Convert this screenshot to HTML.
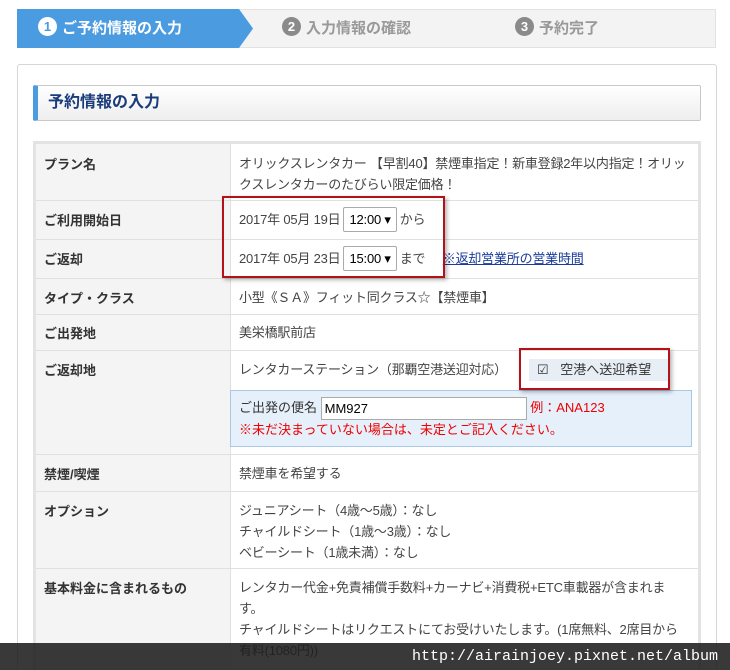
<!DOCTYPE html>
<html><head><meta charset="utf-8"><style>
*{margin:0;padding:0;box-sizing:border-box}
html,body{width:730px;height:670px;overflow:hidden}
body{background:#fff;font-family:"Liberation Sans","Noto Sans CJK JP",sans-serif;font-size:13px;color:#333;position:relative}
.abs{position:absolute}
.steps{left:17px;top:9px;width:699px;height:39px;background:#f3f3f3;border:1px solid #e2e2e2}
.st{position:absolute;top:0;height:37px;line-height:37px;font-size:15px;color:#999;font-weight:bold}
.num{display:inline-block;width:19px;height:19px;border-radius:50%;background:#8a8a8a;color:#fff;text-align:center;line-height:19px;font-size:13px;margin-right:5px;vertical-align:2px}
.card{left:17px;top:64px;width:700px;height:620px;border:1px solid #d6d6d6;border-radius:3px}
.hd{left:33px;top:85px;width:668px;height:36px;border:1px solid #c8c8c8;border-left:5px solid #4a9be0;background:linear-gradient(#fff,#eee);font-size:16px;font-weight:bold;color:#1a3c7a;line-height:34px;padding-left:10px;border-radius:2px}
.tbl{left:33px;top:141px;width:668px;height:540px;border:3px solid #e3e3e3;border-bottom:none;background:#fff}
.lab{left:0;top:0;width:195px;height:540px;background:#f4f4f4;border-right:1px solid #e0e0e0}
.hl{left:0;width:662px;height:1px;background:#e0e0e0}
.l{left:8px;font-weight:bold;font-size:13px;color:#333}
.v{left:203px;font-size:13px;color:#444;line-height:21px;letter-spacing:-0.2px}
.sel{display:inline-block;border:1px solid #aaa;border-radius:2px;padding:0 5px;height:25px;line-height:23px;background:#fff;margin:0 3px;color:#000}
.red{border:2px solid #b3121a;box-shadow:2px 2px 4px rgba(0,0,0,.3)}
</style></head><body>
<div class="abs steps">
 <svg class="abs" style="left:-1px;top:-1px" width="260" height="39"><polygon points="0,0 222,0 236,19.5 222,39 0,39" fill="#4a9be0"/><polyline points="468,0 482,19.5 468,39" fill="none" stroke="#ddd"/></svg>
 <div class="st" style="left:20px;color:#fff"><span class="num" style="background:#fff;color:#4a9be0">1</span>ご予約情報の入力</div>
 <div class="st" style="left:264px"><span class="num">2</span>入力情報の確認</div>
 <div class="st" style="left:497px"><span class="num">3</span>予約完了</div>
</div>
<div class="abs card"></div>
<div class="abs hd">予約情報の入力</div>
<div class="abs tbl">
 <div class="abs lab"></div>
 <div class="abs hl" style="top:56px"></div>
 <div class="abs hl" style="top:95px"></div>
 <div class="abs hl" style="top:134px"></div>
 <div class="abs hl" style="top:170px"></div>
 <div class="abs hl" style="top:206px"></div>
 <div class="abs hl" style="top:310px"></div>
 <div class="abs hl" style="top:347px"></div>
 <div class="abs hl" style="top:424px"></div>
 <div class="abs l" style="top:10px">プラン名</div>
 <div class="abs v" style="top:9px;width:455px">オリックスレンタカー 【早割40】禁煙車指定！新車登録2年以内指定！オリックスレンタカーのたびらい限定価格！</div>
 <div class="abs l" style="top:66px">ご利用開始日</div>
 <div class="abs v" style="top:63px">2017年 05月 19日<span class="sel">12:00 ▾</span>から</div>
 <div class="abs l" style="top:105px">ご返却</div>
 <div class="abs v" style="top:102px">2017年 05月 23日<span class="sel">15:00 ▾</span>まで <span style="color:#1a3c9a;text-decoration:underline;margin-left:14px">※返却営業所の営業時間</span></div>
 <div class="abs l" style="top:144px">タイプ・クラス</div>
 <div class="abs v" style="top:143px">小型《ＳＡ》フィット同クラス☆【禁煙車】</div>
 <div class="abs l" style="top:179px">ご出発地</div>
 <div class="abs v" style="top:178px">美栄橋駅前店</div>
 <div class="abs l" style="top:216px">ご返却地</div>
 <div class="abs v" style="top:215px">レンタカーステーション（那覇空港送迎対応）</div>
 <div class="abs" style="left:493px;top:215px;width:140px;height:22px;background:#e8eef5;font-size:13px;line-height:22px;padding-left:8px">☑ <span style="margin-left:8px">空港へ送迎希望</span></div>
 <div class="abs" style="left:194px;top:246px;width:462px;height:57px;background:#e6f0fa;border:1px solid #a8c8e8;padding:6px 8px;font-size:13px;line-height:20px">ご出発の便名 <span style="display:inline-block;width:206px;height:23px;border:1px solid #aaa;background:#fff;vertical-align:middle;padding-left:3px;line-height:21px;color:#000">MM927</span> <span style="color:#e00">例：ANA123</span><br><span style="color:#e00">※未だ決まっていない場合は、未定とご記入ください。</span></div>
 <div class="abs l" style="top:320px">禁煙/喫煙</div>
 <div class="abs v" style="top:319px">禁煙車を希望する</div>
 <div class="abs l" style="top:357px">オプション</div>
 <div class="abs v" style="top:356px">ジュニアシート（4歳～5歳）：なし<br>チャイルドシート（1歳～3歳）：なし<br>ベビーシート（1歳未満）：なし</div>
 <div class="abs l" style="top:434px">基本料金に含まれるもの</div>
 <div class="abs v" style="top:433px;width:450px">レンタカー代金+免責補償手数料+カーナビ+消費税+ETC車載器が含まれま す。<br>チャイルドシートはリクエストにてお受けいたします。(1席無料、2席目から有料(1080円))</div>
</div>
<div class="abs red" style="left:222px;top:196px;width:223px;height:82px"></div>
<div class="abs red" style="left:519px;top:348px;width:151px;height:42px"></div>
<div class="abs" style="left:0;top:643px;width:730px;height:27px;background:rgba(30,30,30,.88);color:#fff;font-family:'Liberation Mono',monospace;font-size:15px;text-align:right;padding-right:12px;line-height:27px">http://airainjoey.pixnet.net/album</div>
</body></html>
